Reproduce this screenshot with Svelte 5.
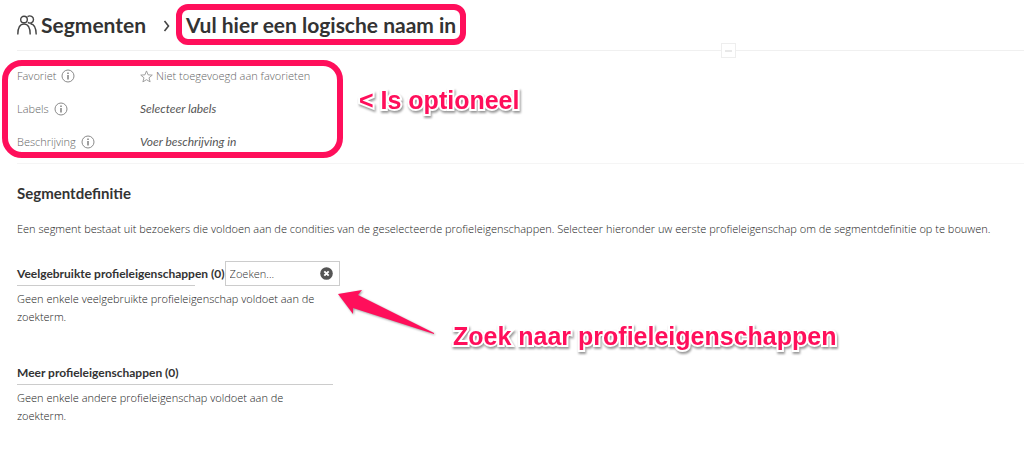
<script>
	let search = "";

	const sections = [
		{
			id: "common",
			title: "Veelgebruikte profieleigenschappen (0)",
			text: "Geen enkele veelgebruikte profieleigenschap voldoet aan de zoekterm.",
			searchable: true,
		},
		{
			id: "more",
			title: "Meer profieleigenschappen (0)",
			text: "Geen enkele andere profieleigenschap voldoet aan de zoekterm.",
			searchable: false,
		},
	];
</script>

{#snippet info(label)}
	<button class="info" aria-label="Info over {label}">
		<svg viewBox="0 0 14 14" width="14" height="14">
			<circle cx="7" cy="7" r="6" fill="none" stroke="#8a8a8a" />
			<path d="M7 6v4.500M7 3.500v1.400" stroke="#777" stroke-width="1.400" />
		</svg>
	</button>
{/snippet}

<main>
	<header>
		<svg class="people" viewBox="0 0 20 20" width="20" height="20">
			<g fill="none" stroke="#444" stroke-width="1.400">
				<circle cx="7" cy="4.500" r="3.300" />
				<path d="M.8 19.500c0-7 1.800-10.500 6.200-10.500s6.200 3.500 6.200 10.500" />
				<path d="M10.500 1.600c3-1.800 6 .1 6 2.900 0 3-3.100 4.600-5.600 2.900M13.500 8.800c3.800.4 5.600 4 5.700 10.700" />
			</g>
		</svg>
		<a href="#segmenten">Segmenten</a>
		<svg class="chevron" viewBox="0 0 8 12" width="8" height="12">
			<path d="M1.500 1l4 5-4 5" fill="none" stroke="#444" stroke-width="1.600" />
		</svg>
		<h1>Vul hier een logische naam in</h1>
		<button class="collapse" aria-label="Inklappen"></button>
	</header>

	<section class="meta">
		<div class="row">
			<span class="name">Favoriet {@render info("Favoriet")}</span>
			<button class="favorite">
				<svg viewBox="0 0 14 14" width="13" height="13">
					<path
						d="M7 1l1.700 4.200 4.500.3-3.500 2.900 1.200 4.400L7 10.400l-3.900 2.400 1.200-4.400L.8 5.500l4.500-.3z"
						fill="none"
						stroke="#999"
					/>
				</svg>
				Niet toegevoegd aan favorieten
			</button>
		</div>
		<div class="row">
			<span class="name">Labels {@render info("Labels")}</span>
			<button class="edit">Selecteer labels</button>
		</div>
		<div class="row">
			<span class="name">Beschrijving {@render info("Beschrijving")}</span>
			<button class="edit">Voer beschrijving in</button>
		</div>
		<div class="frame"></div>
		<p class="note optional">&lt; Is optioneel</p>
	</section>

	<section class="definition">
		<h2>Segmentdefinitie</h2>
		<p class="intro">
			Een segment bestaat uit bezoekers die voldoen aan de condities van de geselecteerde
			profieleigenschappen. Selecteer hieronder uw eerste profieleigenschap om de segmentdefinitie op te
			bouwen.
		</p>

		{#each sections as section (section.id)}
			<div class="group">
				<div class="heading" class:short={section.searchable}>
					<h3>{section.title}</h3>
					{#if section.searchable}
						<div class="search">
							<input type="text" aria-label="Zoeken" placeholder="Zoeken..." bind:value={search} />
							<button aria-label="Wissen" on:click={() => (search = "")}>
								<svg viewBox="0 0 13 13" width="13" height="13">
									<circle cx="6.500" cy="6.500" r="6.300" fill="#555" />
									<path d="M4.300 4.300l4.400 4.400M8.700 4.300l-4.400 4.400" stroke="#fff" stroke-width="1.900" />
								</svg>
							</button>
						</div>
					{/if}
				</div>
				<p>{section.text}</p>
			</div>
		{/each}

		<svg class="arrow" viewBox="0 0 98 48" width="98" height="48">
			<path d="M1 5l24-4-4 5 76 38v1L16 19v6z" fill="#ff0f5b" />
		</svg>
		<p class="note find">Zoek naar profieleigenschappen</p>
	</section>
</main>

<style>
	:global(body) {
		background: #fff;
	}

	main {
		padding-left: 17px;
		font-family: "Open Sans", "Liberation Sans", sans-serif;
		font-size: 11px;
		font-weight: 300;
		line-height: 18px;
		color: #222;
	}

	h1,
	h2,
	h3,
	p {
		margin: 0;
	}

	button {
		padding: 0;
		border: 0;
		background: none;
		font: inherit;
		color: inherit;
		cursor: pointer;
	}

	svg {
		display: block;
		flex: none;
	}

	header,
	h2,
	h3,
	.edit {
		font-family: Lato, "Liberation Sans", sans-serif;
	}

	header {
		position: relative;
		display: flex;
		align-items: center;
		padding: 4px 0 5px;
		border-bottom: 1px solid #f0f0f0;
		color: #333;
	}

	header a {
		margin-left: 4px;
		font-size: 21px;
		font-weight: bold;
		color: inherit;
		text-decoration: none;
	}

	.chevron {
		margin: 2px 5px 0 17px;
	}

	h1 {
		padding: 0 4px;
		border: 6px solid #ff0f5b;
		border-radius: 12px;
		font-size: 21px;
		font-weight: bold;
		line-height: 29px;
	}

	.collapse {
		position: absolute;
		left: 704px;
		bottom: -8px;
		width: 15px;
		height: 15px;
		border: 1px solid #eee;
		background: linear-gradient(#e8e8e8, #e8e8e8) center / 7px 2px no-repeat #fff;
	}

	.meta {
		position: relative;
		display: grid;
		gap: 15px;
		padding: 16px 0 12px;
		border-bottom: 1px solid #f5f5f5;
	}

	.row {
		display: grid;
		grid-template-columns: 123px 1fr;
		justify-items: start;
	}

	.name,
	.favorite {
		display: flex;
		align-items: center;
		gap: 5px;
		color: #666;
	}

	.favorite {
		gap: 3px;
	}

	.edit {
		font-size: 12px;
		font-style: italic;
		font-weight: normal;
		color: #555;
	}

	.frame {
		position: absolute;
		top: 9px;
		left: -15px;
		box-sizing: border-box;
		width: 341px;
		height: 98px;
		border: 6px solid #ff0f5b;
		border-radius: 20px;
		pointer-events: none;
	}

	.note {
		position: absolute;
		font-family: "Liberation Sans", Arial, sans-serif;
		font-size: 25px;
		font-weight: bold;
		line-height: 30px;
		white-space: nowrap;
		color: #ff0f5b;
		paint-order: stroke fill;
		-webkit-text-stroke: 4px #fff;
		filter: drop-shadow(1px 2px 1px #999);
	}

	.optional {
		top: 34px;
		left: 342px;
	}

	.definition {
		position: relative;
		padding-top: 19px;
	}

	h2 {
		font-size: 15px;
		line-height: 20px;
		color: #333;
	}

	.intro {
		margin: 17px 0 23px;
	}

	.group {
		width: 323px;
		margin-bottom: 35px;
	}

	.group p {
		width: 316px;
		margin-top: 4px;
	}

	.heading {
		display: flex;
		align-items: center;
		width: 316px;
		background: linear-gradient(#ccc, #ccc) left bottom / 100% 1px no-repeat;
	}

	.heading.short {
		width: 323px;
		background-size: 178px 1px;
	}

	h3 {
		font-size: 12px;
		line-height: 24px;
		white-space: nowrap;
		color: #333;
	}

	.search {
		display: flex;
		align-items: center;
		flex: 1;
		box-sizing: border-box;
		min-width: 0;
		height: 25px;
		padding: 0 6px 0 4px;
		border: 1px solid #ccc;
		background: #fff;
	}

	.search input {
		flex: 1;
		min-width: 0;
		padding: 0;
		border: 0;
		outline: 0;
		font: inherit;
		color: inherit;
	}

	.search input::placeholder {
		color: #333;
	}

	.arrow {
		position: absolute;
		top: 125px;
		left: 320px;
		filter: drop-shadow(1px 1px 1px #999);
	}

	.find {
		top: 157px;
		left: 436px;
	}
</style>
